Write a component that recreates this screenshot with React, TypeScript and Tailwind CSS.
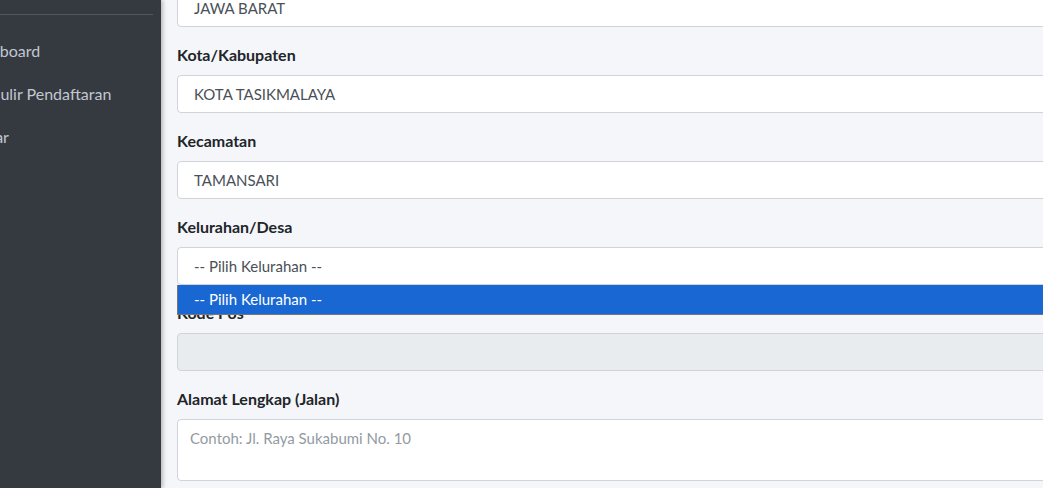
const font = { fontFamily: "Lato, 'Noto Sans', sans-serif" };

function Field({ label, children }: { label: string; children: React.ReactNode }) {
  return (
    <div className="mb-4">
      <div className="mb-2 h-6 text-[16px] font-bold leading-6 text-[#212529]">{label}</div>
      {children}
    </div>
  );
}

function Box({ value, className = "" }: { value?: string; className?: string }) {
  return (
    <div
      className={`flex h-[38px] items-center rounded-[4px] border border-[#ced4da] bg-white pl-4 text-[15px] text-[#495057] ${className}`}
    >
      {value}
    </div>
  );
}

export default function App() {
  return (
    <div className="flex h-[488px] w-[1043px] overflow-hidden bg-[#f4f6f9]" style={font}>
      <aside className="relative z-10 w-[161px] shrink-0 overflow-hidden bg-[#343a40] shadow-[2px_0_4px_rgba(0,0,0,0.25)]">
        <div className="mr-[8px] h-[15px] border-b border-[#4f5962]" />
        <nav className="-ml-[36px] flex flex-col pt-[24px] text-[16px] text-[#c2c7d0]">
          <div className="h-[43px] whitespace-nowrap">Dashboard</div>
          <div className="h-[43px] whitespace-nowrap">Formulir Pendaftaran</div>
          <div className="h-[43px] whitespace-nowrap">Keluar</div>
        </nav>
      </aside>

      <main className="-mt-[11px] w-[1000px] shrink-0 pl-4">
        <div className="mb-4">
          <Box value="JAWA BARAT" />
        </div>
        <Field label="Kota/Kabupaten">
          <Box value="KOTA TASIKMALAYA" />
        </Field>
        <Field label="Kecamatan">
          <Box value="TAMANSARI" />
        </Field>
        <Field label="Kelurahan/Desa">
          <div className="relative z-10">
            <Box value="-- Pilih Kelurahan --" className="border-[#80bdff]" />
            <div className="absolute left-0 right-0 top-[38px] flex h-[30px] items-center border border-[#767676] border-t-0 bg-[#1967d2] pl-4 text-[15px] text-white">
              -- Pilih Kelurahan --
            </div>
          </div>
        </Field>
        <Field label="Kode Pos">
          <div className="h-[38px] rounded-[4px] border border-[#ced4da] bg-[#e9ecef]" />
        </Field>
        <Field label="Alamat Lengkap (Jalan)">
          <div className="h-[62px] rounded-[4px] border border-[#ced4da] bg-white px-3 py-[6px] text-[15px] leading-6 text-[#939ba2]">
            Contoh: Jl. Raya Sukabumi No. 10
          </div>
        </Field>
      </main>
    </div>
  );
}
